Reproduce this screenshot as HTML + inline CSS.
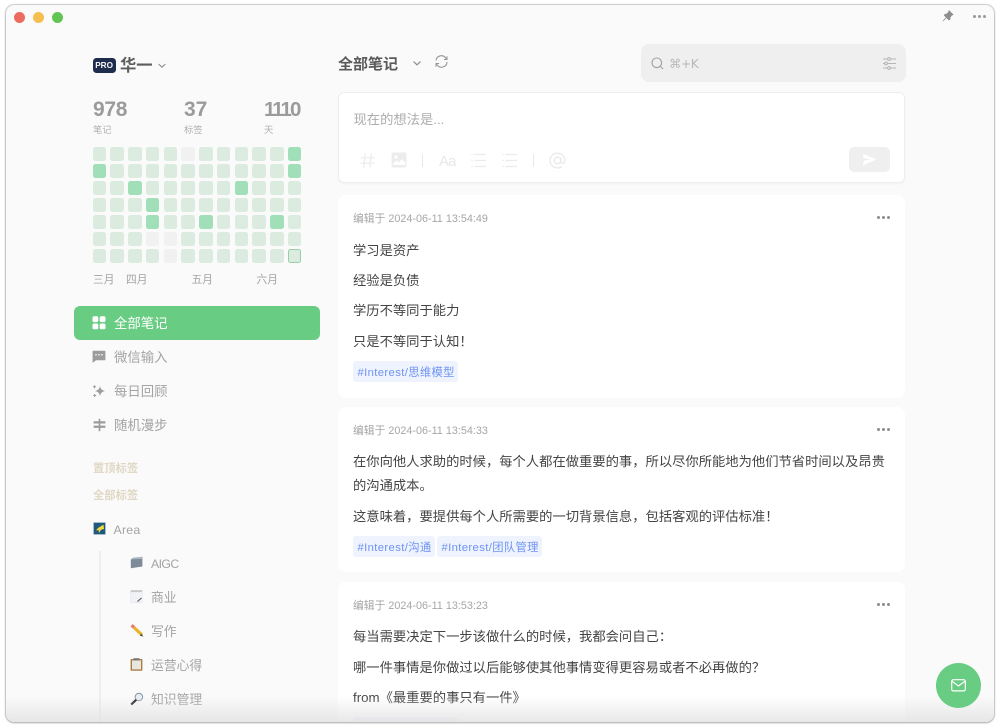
<!DOCTYPE html>
<html lang="zh">
<head>
<meta charset="utf-8">
<title>全部笔记</title>
<style>
html,body{margin:0;padding:0;width:1000px;height:728px;overflow:hidden;background:#fff}
*{box-sizing:border-box}
body{font-family:"Liberation Sans","Noto Sans CJK SC",sans-serif;position:relative}
#win{position:absolute;left:6px;top:5px;width:988px;height:717px;background:#fafafa;border-radius:8px;box-shadow:0 0 1.5px 0.5px #a5a5a5,0 1px 2px #c4c4c4;overflow:hidden}
.a{position:absolute;white-space:nowrap}
.t{position:absolute;white-space:nowrap;line-height:20px;height:20px}
.dot{position:absolute;width:11.5px;height:11.5px;border-radius:50%;top:6.5px}
.cell{position:absolute;width:13.4px;height:13.4px;border-radius:2.5px;background:#dcebdf;}
.d{background:#a0dfb8}.g{background:#f1f1f1}
.nav{font-size:13.4px;color:#a3a3a3;letter-spacing:0}
.sec{font-size:11.3px;color:#e0d8c4;font-weight:700}
.card{position:absolute;left:332px;width:567px;background:#fff;border-radius:8px}
.time{font-size:10.8px;color:#a6a6a6;letter-spacing:0}
.p{font-size:13.3px;color:#444;left:15px}
.tag{position:absolute;height:21px;line-height:24.5px;background:#eef3fe;color:#6f93f2;font-size:11.3px;border-radius:3px;padding:0 4.5px;white-space:nowrap;letter-spacing:.36px}
.more{position:absolute;width:13px;height:3px}
.more i{position:absolute;top:0;width:3px;height:3px;border-radius:50%;background:#8c8c8c}
.more i:nth-child(1){left:0}.more i:nth-child(2){left:5px}.more i:nth-child(3){left:10px}
svg{position:absolute;display:block;overflow:visible}
#fade{position:absolute;left:0;right:0;bottom:0;height:26px;background:linear-gradient(to bottom,rgba(228,228,228,0),rgba(226,226,226,.8));pointer-events:none}
</style>
</head>
<body>
<div id="win">
  <!-- traffic lights -->
  <div class="dot" style="left:7.5px;background:#ed6a5e"></div>
  <div class="dot" style="left:26.5px;background:#f5bf4f"></div>
  <div class="dot" style="left:45.5px;background:#61c554"></div>

  <!-- pin + more -->
  <svg style="left:936px;top:5px" width="12" height="12" viewBox="0 0 12 12"><path d="M7 0.8L11 4.6 9.6 5.2 8 7.6 8 9.4 6.9 9.9 2.3 5.3 3 4.2 4.6 4.1 6.6 2.3Z M4.2 7.7L1 11" fill="#8e8e8e" stroke="#8e8e8e" stroke-width=".8"/></svg>
  <div class="more" style="left:967px;top:10px"><i style="background:#999"></i><i style="background:#999"></i><i style="background:#999"></i></div>

  <!-- user -->
  <div class="a" style="left:86.6px;top:53.3px;width:23px;height:15px;border-radius:3.5px;background:#1f2d4d;color:#f4f4f6;font-size:8.2px;font-weight:700;line-height:15px;text-align:center">PRO</div>
  <div class="t" style="left:114px;top:51px;font-size:16.3px;font-weight:700;color:#5c5c5c">华一</div>
  <svg style="left:152px;top:58px" width="8" height="6" viewBox="0 0 8 6"><path d="M.6 1L4 4.2 7.4 1" fill="none" stroke="#8f8f8f" stroke-width="1.1"/></svg>

  <!-- stats -->
  <div class="t" style="left:87px;top:94px;font-size:21px;font-weight:700;color:#9b9b9b;line-height:22px;height:22px;letter-spacing:-.3px">978</div>
  <div class="t" style="left:178px;top:94px;font-size:21px;font-weight:700;color:#9b9b9b;line-height:22px;height:22px">37</div>
  <div class="t" style="left:258px;top:94px;font-size:20.5px;font-weight:700;color:#9b9b9b;line-height:22px;height:22px;letter-spacing:-2px">1110</div>
  <div class="t" style="left:87px;top:115px;font-size:9.3px;color:#b0b0b0">笔记</div>
  <div class="t" style="left:178px;top:115px;font-size:9.3px;color:#b0b0b0">标签</div>
  <div class="t" style="left:258px;top:115px;font-size:9.3px;color:#b0b0b0">天</div>

  <!-- heatmap -->
  <div id="heat" style="position:absolute;left:0;top:0">
<div class="cell" style="left:86.7px;top:142.3px"></div><div class="cell" style="left:104.4px;top:142.3px"></div><div class="cell" style="left:122.2px;top:142.3px"></div><div class="cell" style="left:139.9px;top:142.3px"></div><div class="cell" style="left:157.7px;top:142.3px"></div><div class="cell g" style="left:175.4px;top:142.3px"></div><div class="cell" style="left:193.2px;top:142.3px"></div><div class="cell" style="left:210.9px;top:142.3px"></div><div class="cell" style="left:228.7px;top:142.3px"></div><div class="cell" style="left:246.4px;top:142.3px"></div><div class="cell" style="left:264.2px;top:142.3px"></div><div class="cell d" style="left:281.9px;top:142.3px"></div>
<div class="cell d" style="left:86.7px;top:159.3px"></div><div class="cell" style="left:104.4px;top:159.3px"></div><div class="cell" style="left:122.2px;top:159.3px"></div><div class="cell" style="left:139.9px;top:159.3px"></div><div class="cell" style="left:157.7px;top:159.3px"></div><div class="cell" style="left:175.4px;top:159.3px"></div><div class="cell" style="left:193.2px;top:159.3px"></div><div class="cell" style="left:210.9px;top:159.3px"></div><div class="cell" style="left:228.7px;top:159.3px"></div><div class="cell" style="left:246.4px;top:159.3px"></div><div class="cell" style="left:264.2px;top:159.3px"></div><div class="cell d" style="left:281.9px;top:159.3px"></div>
<div class="cell" style="left:86.7px;top:176.3px"></div><div class="cell" style="left:104.4px;top:176.3px"></div><div class="cell d" style="left:122.2px;top:176.3px"></div><div class="cell" style="left:139.9px;top:176.3px"></div><div class="cell" style="left:157.7px;top:176.3px"></div><div class="cell" style="left:175.4px;top:176.3px"></div><div class="cell" style="left:193.2px;top:176.3px"></div><div class="cell" style="left:210.9px;top:176.3px"></div><div class="cell d" style="left:228.7px;top:176.3px"></div><div class="cell" style="left:246.4px;top:176.3px"></div><div class="cell" style="left:264.2px;top:176.3px"></div><div class="cell" style="left:281.9px;top:176.3px"></div>
<div class="cell" style="left:86.7px;top:193.3px"></div><div class="cell" style="left:104.4px;top:193.3px"></div><div class="cell" style="left:122.2px;top:193.3px"></div><div class="cell d" style="left:139.9px;top:193.3px"></div><div class="cell" style="left:157.7px;top:193.3px"></div><div class="cell" style="left:175.4px;top:193.3px"></div><div class="cell" style="left:193.2px;top:193.3px"></div><div class="cell" style="left:210.9px;top:193.3px"></div><div class="cell" style="left:228.7px;top:193.3px"></div><div class="cell" style="left:246.4px;top:193.3px"></div><div class="cell" style="left:264.2px;top:193.3px"></div><div class="cell" style="left:281.9px;top:193.3px"></div>
<div class="cell" style="left:86.7px;top:210.3px"></div><div class="cell" style="left:104.4px;top:210.3px"></div><div class="cell" style="left:122.2px;top:210.3px"></div><div class="cell d" style="left:139.9px;top:210.3px"></div><div class="cell" style="left:157.7px;top:210.3px"></div><div class="cell" style="left:175.4px;top:210.3px"></div><div class="cell d" style="left:193.2px;top:210.3px"></div><div class="cell" style="left:210.9px;top:210.3px"></div><div class="cell" style="left:228.7px;top:210.3px"></div><div class="cell" style="left:246.4px;top:210.3px"></div><div class="cell d" style="left:264.2px;top:210.3px"></div><div class="cell" style="left:281.9px;top:210.3px"></div>
<div class="cell" style="left:86.7px;top:227.3px"></div><div class="cell" style="left:104.4px;top:227.3px"></div><div class="cell" style="left:122.2px;top:227.3px"></div><div class="cell g" style="left:139.9px;top:227.3px"></div><div class="cell g" style="left:157.7px;top:227.3px"></div><div class="cell" style="left:175.4px;top:227.3px"></div><div class="cell" style="left:193.2px;top:227.3px"></div><div class="cell" style="left:210.9px;top:227.3px"></div><div class="cell" style="left:228.7px;top:227.3px"></div><div class="cell" style="left:246.4px;top:227.3px"></div><div class="cell" style="left:264.2px;top:227.3px"></div><div class="cell" style="left:281.9px;top:227.3px"></div>
<div class="cell" style="left:86.7px;top:244.3px"></div><div class="cell" style="left:104.4px;top:244.3px"></div><div class="cell" style="left:122.2px;top:244.3px"></div><div class="cell" style="left:139.9px;top:244.3px"></div><div class="cell g" style="left:157.7px;top:244.3px"></div><div class="cell" style="left:175.4px;top:244.3px"></div><div class="cell" style="left:193.2px;top:244.3px"></div><div class="cell" style="left:210.9px;top:244.3px"></div><div class="cell" style="left:228.7px;top:244.3px"></div><div class="cell" style="left:246.4px;top:244.3px"></div><div class="cell" style="left:264.2px;top:244.3px"></div><div class="cell" style="left:281.9px;top:244.3px;border:1.2px solid #95cfa9"></div>
  </div>
  <div class="t" style="left:87px;top:265px;font-size:10.7px;color:#a3a3a3">三月</div>
  <div class="t" style="left:120px;top:265px;font-size:10.7px;color:#a3a3a3">四月</div>
  <div class="t" style="left:185.5px;top:265px;font-size:10.7px;color:#a3a3a3">五月</div>
  <div class="t" style="left:250.5px;top:265px;font-size:10.7px;color:#a3a3a3">六月</div>

  <!-- nav -->
  <div class="a" style="left:67.5px;top:301px;width:246px;height:34px;background:#69cc83;border-radius:6px"></div>
  <svg style="left:86px;top:311px" width="14" height="14" viewBox="0 0 14 14" fill="#fff"><rect x=".5" y=".3" width="5.8" height="5.8" rx="1.7"/><rect x="7.7" y=".3" width="5.8" height="5.8" rx="1.7"/><rect x=".5" y="7.5" width="5.8" height="5.8" rx="1.7"/><rect x="7.7" y="7.5" width="5.8" height="5.8" rx="1.7"/></svg>
  <div class="t nav" style="left:108px;top:309px;color:#fff">全部笔记</div>

  <svg style="left:86px;top:345px" width="14" height="14" viewBox="0 0 14 14"><path d="M1.3 .8H12.7A.7.7 0 0 1 13.4 1.5V9.6A.7.7 0 0 1 12.7 10.3H4L.6 12.9V1.5A.7.7 0 0 1 1.3 .8Z" fill="#9c9c9c"/><circle cx="4" cy="4.8" r=".85" fill="#fafafa"/><circle cx="7" cy="4.8" r=".85" fill="#fafafa"/><circle cx="10" cy="4.8" r=".85" fill="#fafafa"/></svg>
  <div class="t nav" style="left:108px;top:343px">微信输入</div>

  <svg style="left:86px;top:379px" width="14" height="14" viewBox="0 0 14 14" fill="#9c9c9c"><path d="M8 1.5C8.5 5 9.5 6 13 7 9.5 8 8.5 9 8 12.5 7.5 9 6.5 8 3 7 6.5 6 7.5 5 8 1.5Z"/><path d="M2.5 1.2V4.4M.9 2.8H4.1M2.7 10V13M1.2 11.5H4.2" stroke="#9c9c9c" stroke-width="1"/></svg>
  <div class="t nav" style="left:108px;top:377px">每日回顾</div>

  <svg style="left:87px;top:413px" width="13" height="14" viewBox="0 0 13 14"><path d="M6.5 .8V13.2" stroke="#9c9c9c" stroke-width="1.7"/><path d="M.6 3.2H12.4V5.5H.6ZM.6 7.6H12.4V9.9H.6Z" fill="#9c9c9c"/></svg>
  <div class="t nav" style="left:108px;top:411px">随机漫步</div>

  <div class="t sec" style="left:87px;top:454px">置顶标签</div>
  <div class="t sec" style="left:87px;top:481px">全部标签</div>

  <!-- tag tree -->
  <svg style="left:87px;top:517px" width="13" height="13" viewBox="0 0 13 13"><rect width="13" height="13" fill="#dfe6ee"/><rect x=".7" y=".7" width="11.6" height="11.6" fill="#1f5a7e"/><path d="M5 6L10.5 2.6 11 7 8 7.8 6 11 5.5 8 3 8.5Z" fill="#f2d83c"/></svg>
  <div class="t" style="left:107.5px;top:515px;font-size:12.3px;color:#a3a3a3;letter-spacing:.25px">Area</div>
  <div class="a" style="left:93px;top:546px;width:2px;height:171px;background:#eeeeee"></div>

  <svg style="left:124px;top:551px" width="13" height="13" viewBox="0 0 13 13"><path d="M.8 3.4L12.4.8V10.5L.8 12.2Z" fill="#7d8b99"/><path d="M.8 3.4L3 1.6 12.4.8 12.2 3 .8 3.4Z" fill="#aab5bf"/></svg>
  <div class="t" style="left:145px;top:549px;font-size:12.3px;color:#a3a3a3;letter-spacing:-.6px">AIGC</div>

  <svg style="left:124px;top:585px" width="13" height="13" viewBox="0 0 13 13"><rect x=".8" y=".3" width="11.4" height="12.4" fill="#f1f2f5" stroke="#dfe1e5" stroke-width=".5"/><rect x=".8" y=".3" width="11.4" height="1.8" fill="#c9c9cc"/><path d="M7.5 11.5L11.5 8" stroke="#555" stroke-width="1.1"/></svg>
  <div class="t" style="left:145px;top:583px;font-size:12.8px;color:#a3a3a3">商业</div>

  <svg style="left:124px;top:619px" width="14" height="14" viewBox="0 0 14 14"><path d="M3 2.5L12 11" stroke="#eab12c" stroke-width="3.2"/><path d="M1.6 1.2L3.8 3.3" stroke="#e67a7a" stroke-width="3.2"/><path d="M11 9.6L13.6 12.6 10 11.8Z" fill="#444"/></svg>
  <div class="t" style="left:145px;top:617px;font-size:12.8px;color:#a3a3a3">写作</div>

  <svg style="left:124px;top:653px" width="13" height="13" viewBox="0 0 13 13"><rect x=".6" y="1" width="11.8" height="11.8" rx=".8" fill="#a97c44"/><rect x="2" y="2.4" width="9" height="9" fill="#e9e6df"/><rect x="3.5" y=".2" width="6" height="2.2" fill="#777"/></svg>
  <div class="t" style="left:145px;top:651px;font-size:12.8px;color:#a3a3a3">运营心得</div>

  <svg style="left:124px;top:687px" width="14" height="14" viewBox="0 0 14 14"><circle cx="8.9" cy="5" r="3.7" fill="#e8eef5" stroke="#8f99a8" stroke-width="1.1"/><path d="M6.2 7.8L1.2 12.6" stroke="#222" stroke-width="2.2"/></svg>
  <div class="t" style="left:145px;top:685px;font-size:12.8px;color:#a3a3a3">知识管理</div>

  <!-- header -->
  <div class="t" style="left:332px;top:50px;font-size:15px;font-weight:700;color:#5a5a5a">全部笔记</div>
  <svg style="left:406px;top:55px" width="10" height="7" viewBox="0 0 10 7"><path d="M1.5 1.5L5 4.8 8.5 1.5" fill="none" stroke="#8a8a8a" stroke-width="1.2"/></svg>
  <svg style="left:429px;top:50px" width="13" height="13" viewBox="0 0 13 13" fill="none" stroke="#949494" stroke-width="1.1"><path d="M1 5.4A5.4 5.4 0 0 1 10.6 2.8L11.9 4.3"/><path d="M12 6.9A5.4 5.4 0 0 1 2.4 10.2L1.1 8.7"/><path d="M12 1.2V4.5H8.9M1 11.8V8.5H4.1" stroke-width="1"/></svg>

  <!-- search -->
  <div class="a" style="left:635px;top:39px;width:265px;height:38px;background:#efefef;border-radius:8px"></div>
  <svg style="left:645px;top:52px" width="13" height="13" viewBox="0 0 13 13" fill="none" stroke="#a3a3a3" stroke-width="1.1"><circle cx="5.8" cy="5.8" r="4.8"/><path d="M9.4 9.4L12 12"/></svg>
  <div class="t" style="left:663px;top:49px;font-size:12.3px;color:#b8b8b8;font-family:'DejaVu Sans','Liberation Sans',sans-serif;letter-spacing:-.4px">⌘+K</div>
  <svg style="left:877px;top:52px" width="13" height="13" viewBox="0 0 13 13" fill="none" stroke="#b5b5b5" stroke-width="1"><path d="M0 2H4.5M7.5 2H13M0 6.5H1.5M4.5 6.5H13M0 11H4.5M7.5 11H13"/><circle cx="6" cy="2" r="1.4"/><circle cx="3" cy="6.5" r="1.4"/><circle cx="6" cy="11" r="1.4"/></svg>

  <!-- editor -->
  <div class="a" style="left:332px;top:87px;width:567px;height:91px;background:#fff;border:1px solid #eeeeee;border-radius:6px;box-shadow:0 1px 2px rgba(0,0,0,.04)"></div>
  <div class="t" style="left:347.5px;top:105px;font-size:13.3px;color:#adadad">现在的想法是...</div>
  <svg style="left:354px;top:148px" width="15" height="15" viewBox="0 0 15 15" fill="none" stroke="#ebebeb" stroke-width="1.2"><path d="M5.2 .5L3.8 14.5M11.2 .5L9.8 14.5M.5 4.8H14.5M.5 10.2H14.5"/></svg>
  <svg style="left:385px;top:147px" width="16" height="16" viewBox="0 0 16 16"><rect x=".5" y=".5" width="15" height="15" rx="2" fill="#ececec"/><circle cx="5" cy="5" r="1.6" fill="#fff"/><path d="M1.5 12.5L5.5 8.5 8 10.5 11 7 14.5 11V13H1.5Z" fill="#fff"/></svg>
  <div class="a" style="left:416px;top:149px;width:1px;height:13px;background:#e8e8e8"></div>
  <div class="t" style="left:433px;top:147px;font-size:15px;color:#e8e8e8;letter-spacing:-.9px">Aa</div>
  <svg style="left:465px;top:148px" width="15" height="15" viewBox="0 0 15 15" fill="none" stroke="#ebebeb" stroke-width="1.2"><path d="M3.5 1.5H15M3.5 7.5H15M3.5 13.5H15M.3 1.5H1.8M.3 7.5H1.8M.3 13.5H1.8"/></svg>
  <svg style="left:496px;top:148px" width="15" height="15" viewBox="0 0 15 15" fill="none" stroke="#ebebeb" stroke-width="1.2"><path d="M3.5 1.5H15M3.5 7.5H15M3.5 13.5H15M.3 1.5H1.8M.3 7.5H1.8M.3 13.5H1.8"/></svg>
  <div class="a" style="left:527px;top:149px;width:1px;height:13px;background:#e8e8e8"></div>
  <svg style="left:543px;top:147px" width="17" height="17" viewBox="0 0 17 17" fill="none" stroke="#e9e9e9" stroke-width="1.3"><circle cx="8.5" cy="8.5" r="3.3"/><path d="M11.8 5.2V9.8C11.8 12 15.8 12 15.8 8.5A7.4 7.4 0 1 0 12.5 14.7"/></svg>
  <div class="a" style="left:843px;top:142px;width:41px;height:25px;background:#efefef;border-radius:5px"></div>
  <svg style="left:856px;top:148px" width="15" height="13" viewBox="0 0 15 13"><path d="M.8.6L14.4 6.5.8 12.4 1.9 7.8 8.6 6.5 1.9 5.2Z" fill="#fff"/></svg>

  <!-- card 1 -->
  <div class="card" style="top:190px;height:203px">
    <div class="t time" style="left:15px;top:14px">编辑于 2024-06-11 13:54:49</div>
    <div class="more" style="left:539px;top:21px"><i></i><i></i><i></i></div>
    <div class="t p" style="top:46px">学习是资产</div>
    <div class="t p" style="top:76px">经验是负债</div>
    <div class="t p" style="top:106px">学历不等同于能力</div>
    <div class="t p" style="top:137px">只是不等同于认知！</div>
    <div class="tag" style="left:15px;top:166px;width:105px">#Interest/思维模型</div>
  </div>

  <!-- card 2 -->
  <div class="card" style="top:402px;height:165px">
    <div class="t time" style="left:15px;top:14px">编辑于 2024-06-11 13:54:33</div>
    <div class="more" style="left:539px;top:21px"><i></i><i></i><i></i></div>
    <div class="t p" style="top:45px">在你向他人求助的时候，每个人都在做重要的事，所以尽你所能地为他们节省时间以及昂贵</div>
    <div class="t p" style="top:69px">的沟通成本。</div>
    <div class="t p" style="top:100px">这意味着，要提供每个人所需要的一切背景信息，包括客观的评估标准！</div>
    <div class="tag" style="left:15px;top:129px;width:82px">#Interest/沟通</div>
    <div class="tag" style="left:99px;top:129px;width:105px">#Interest/团队管理</div>
  </div>

  <!-- card 3 -->
  <div class="card" style="top:577px;height:160px">
    <div class="t time" style="left:15px;top:14px">编辑于 2024-06-11 13:53:23</div>
    <div class="more" style="left:539px;top:21px"><i></i><i></i><i></i></div>
    <div class="t p" style="top:45px">每当需要决定下一步该做什么的时候，我都会问自己：</div>
    <div class="t p" style="top:76px">哪一件事情是你做过以后能够使其他事情变得更容易或者不必再做的？</div>
    <div class="t p" style="top:106px">from《最重要的事只有一件》</div>
    <div class="tag" style="left:15px;top:135px;width:105px"></div>
  </div>

  <div id="fade"></div>

  <!-- fab -->
  <div class="a" style="left:930px;top:658px;width:45px;height:45px;border-radius:50%;background:#69cc83"></div>
  <svg style="left:945px;top:674px" width="15" height="13" viewBox="0 0 15 13" fill="none" stroke="#fff" stroke-width="1.2"><rect x=".7" y=".7" width="13.6" height="11.2" rx="1.6"/><path d="M1 2.2L7.5 7 14 2.2"/></svg>
</div>
</body>
</html>
